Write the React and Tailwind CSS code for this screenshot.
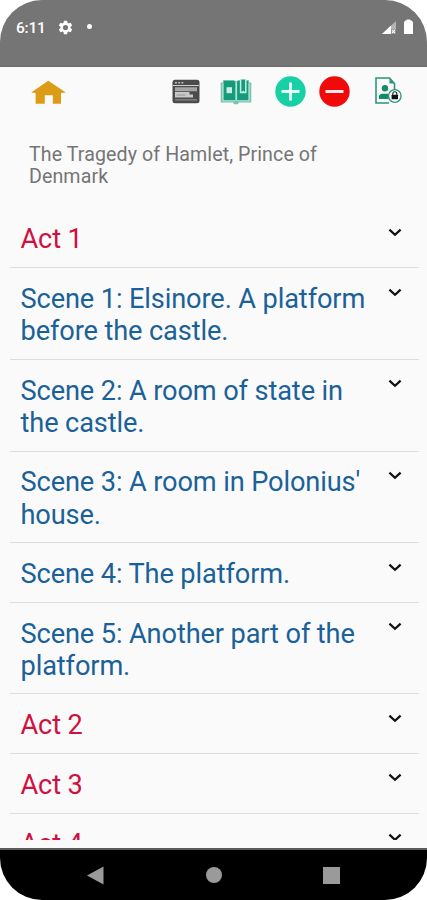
import React from "react";

const rows = [
  { title: "Act 1", act: true },
  { title: "Scene 1: Elsinore. A platform before the castle." },
  { title: "Scene 2: A room of state in the castle." },
  { title: "Scene 3: A room in Polonius' house." },
  { title: "Scene 4: The platform." },
  { title: "Scene 5: Another part of the platform." },
  { title: "Act 2", act: true },
  { title: "Act 3", act: true },
  { title: "Act 4", act: true },
];

function StatusBar() {
  return (
    <div className="h-[67px] shrink-0 bg-[#757575] border-b border-[#6a6a6a] flex items-start pt-[18px] pl-4 pr-[14px] text-white">
      <span className="text-[15.5px] leading-[20px] font-medium tracking-[-0.2px] w-[30px] whitespace-nowrap">6:11</span>
      <svg className="ml-[11px] mt-px w-[17px] h-[17px]" viewBox="0 0 24 24" fill="currentColor">
        <path d="M19.14 12.94c.04-.3.06-.61.06-.94s-.02-.64-.07-.94l2.03-1.58a.49.49 0 0 0 .12-.61l-1.92-3.32a.49.49 0 0 0-.59-.22l-2.39.96a7 7 0 0 0-1.62-.94l-.36-2.54a.48.48 0 0 0-.48-.41h-3.84a.48.48 0 0 0-.47.41l-.36 2.54a7.3 7.3 0 0 0-1.62.94l-2.39-.96a.48.48 0 0 0-.59.22L2.74 8.87a.48.48 0 0 0 .12.61l2.03 1.58a6 6 0 0 0 0 1.88l-2.03 1.58a.49.49 0 0 0-.12.61l1.92 3.32c.12.22.37.29.59.22l2.39-.96c.5.38 1.03.7 1.62.94l.36 2.54c.05.24.24.41.48.41h3.84c.24 0 .44-.17.47-.41l.36-2.54a7 7 0 0 0 1.62-.94l2.39.96c.22.08.47 0 .59-.22l1.92-3.32a.48.48 0 0 0-.12-.61zM12 15.6a3.6 3.6 0 1 1 0-7.2 3.6 3.6 0 0 1 0 7.2z" />
      </svg>
      <span className="ml-[13px] mt-[6px] w-[5px] h-[5px] rounded-full bg-white" />
      <svg className="ml-auto mt-[3px] w-[14px] h-[13px]" viewBox="0 0 14 13">
        <path d="M0 13 14 0v13z" fill="#b5b5b5" />
        <path d="M0 13 9 4.6V13z" fill="#fff" />
        <path d="M9 8.5h5V13H9z" fill="#8c8c8c" />
        <path d="m10 9.2 3 3m0-3-3 3" stroke="#fff" strokeWidth="1.1" />
      </svg>
      <svg className="ml-2 mt-px w-[9px] h-[15px]" viewBox="0 0 9 15" fill="#fff">
        <path d="M0 3.2 1.3 1.5h1L3 .5h3l.7 1h1L9 3.2V15H0z" />
      </svg>
    </div>
  );
}

function Toolbar() {
  return (
    <div className="h-[50px] shrink-0 flex items-center pl-[31px] pr-[25px]">
      <svg className="w-[35px] h-[24px]" viewBox="0 0 35 24">
        <path d="M17.3.7 34.8 12.4l-4.8.7v10.7h-8.2v-8.5h-8v8.5H4.6V13.1L.2 12.4z" fill="#dc9c18" />
      </svg>
      <svg className="ml-[106px] mb-px w-[28px] h-[25px]" viewBox="0 0 28 25">
        <rect x=".5" y=".8" width="27" height="23.4" rx="2.5" fill="#4b4a4c" />
        <path d="M3 3.8h2m1.2 0h2m1.2 0h2" stroke="#bbb" strokeWidth="1.4" />
        <path d="M1 6.5h26" stroke="#d0d0d0" strokeWidth="1" />
        <path d="M3 10.2h22" stroke="#a5a5a5" strokeWidth="4" />
        <path d="M3 13h14.5v2.6H21v2.8H3z" fill="#c8c8c8" />
        <path d="M3 20.8h22" stroke="#8b8b8b" strokeWidth="1.2" />
        <path d="M4.5 16h9" stroke="#888" strokeWidth=".8" />
      </svg>
      <svg className="ml-[20px] w-[32px] h-[26px]" viewBox="0 0 32 26">
        <path d="M3 1.2h11l2 1 2-1h11V3.5h2.3v20.1H19l-1.2 1.6h-3.6L13 23.6H.7V3.5H3z" fill="#79c4ae" />
        <path d="M3.8 1.7H14l1.2 1v18.5H3.8zM17.2 2.7l1.2-1h9.8v19.5h-11z" fill="#159b7c" />
        <path d="M16.2 3v19" stroke="#c7eee3" strokeWidth="1" />
        <path d="M2.8 4.5v17.3H15M29.2 4.5v17.3H17.4" fill="none" stroke="#c7eee3" strokeWidth=".8" />
        <rect x="6.5" y="8.2" width="5.5" height="6" fill="#c7eee3" />
        <path d="M20.6.5v13h5.2V.5" fill="#159b7c" stroke="#c7eee3" strokeWidth="1.5" />
        <path d="m21 14 2.2-2.6 2.2 2.6" fill="#c7eee3" />
      </svg>
      <svg className="ml-[23px] mb-px w-[31px] h-[31px]" viewBox="0 0 31 31">
        <circle cx="15.5" cy="15.5" r="15.2" fill="#17d0a4" />
        <path d="M15.5 6.5v18M6.5 15.5h18" stroke="#e4fff8" strokeWidth="3" />
      </svg>
      <svg className="ml-[13px] mb-px w-[31px] h-[31px]" viewBox="0 0 31 31">
        <circle cx="15.5" cy="15.5" r="15.2" fill="#f00a0a" />
        <path d="M6.5 15.5h18" stroke="#ffeaea" strokeWidth="3.2" />
      </svg>
      <svg className="ml-auto mb-1 w-[27px] h-[27px]" viewBox="0 0 27 27">
        <path d="M14 26H1V1h13.5l5 5.5v7" fill="none" stroke="#2b9679" strokeWidth="1.6" />
        <path d="M14.5 1v5.5h5z" fill="#2b9679" />
        <circle cx="10" cy="11.2" r="3.2" fill="#148b68" />
        <path d="M4 22v-3.4l2.2-1.8h7.3V22z" fill="#148b68" />
        <circle cx="19.8" cy="19" r="6.3" fill="#fafafa" stroke="#2b9679" strokeWidth="1.3" />
        <path d="M17.8 18v-1.2a2 2 0 0 1 4 0V18" fill="none" stroke="#222" strokeWidth="1.1" />
        <rect x="16.6" y="17.7" width="6.4" height="4.6" rx=".5" fill="#111" />
      </svg>
    </div>
  );
}

function Row({ title, act }) {
  return (
    <div className="flex items-start border-b border-[#dedede] pl-[10.5px] pr-[17px] pt-[14.9px] pb-[11.6px]">
      <div className={`flex-1 pr-4 text-[27.2px] tracking-[-0.12px] leading-[32.1px] ${act ? "text-[#d01040]" : "text-[#1a6199]"}`}>
        {title}
      </div>
      <svg className="mt-[4.5px] w-[14px] h-[9px] shrink-0" viewBox="0 0 14 9">
        <path d="m1.4 1.6 5.6 5.2 5.6-5.2" fill="none" stroke="#111" strokeWidth="2.2" />
      </svg>
    </div>
  );
}

function NavBar() {
  return (
    <div className="h-[52px] shrink-0 bg-black border-t-2 border-[#5c5c5c] flex items-center pl-[87px] pr-[87px] justify-between">
      <svg className="w-[17px] h-[19px]" viewBox="0 0 17 19">
        <path d="M0 9.5 16.5.5v18z" fill="#9a9a9a" />
      </svg>
      <span className="w-4 h-4 rounded-full bg-[#9a9a9a]" />
      <span className="w-[17px] h-[17px] bg-[#9a9a9a]" />
    </div>
  );
}

export default function App() {
  return (
    <div className="w-[427px] h-[900px] bg-white font-['Roboto',sans-serif]">
      <div className="w-full h-full flex flex-col overflow-hidden rounded-[42px] bg-[#fafafa]">
        <StatusBar />
        <Toolbar />
        <h1 className="shrink-0 h-[91.6px] pt-[26.6px] pl-[29px] pr-20 text-[19.6px] tracking-[0.1px] leading-[22.8px] font-normal text-[#757575]">
          The Tragedy of Hamlet, Prince of Denmark
        </h1>
        <div className="flex-1 min-h-0 overflow-hidden ml-[10px] mr-2 mb-2">
          {rows.map((row) => (
            <Row key={row.title} {...row} />
          ))}
        </div>
        <NavBar />
      </div>
    </div>
  );
}
